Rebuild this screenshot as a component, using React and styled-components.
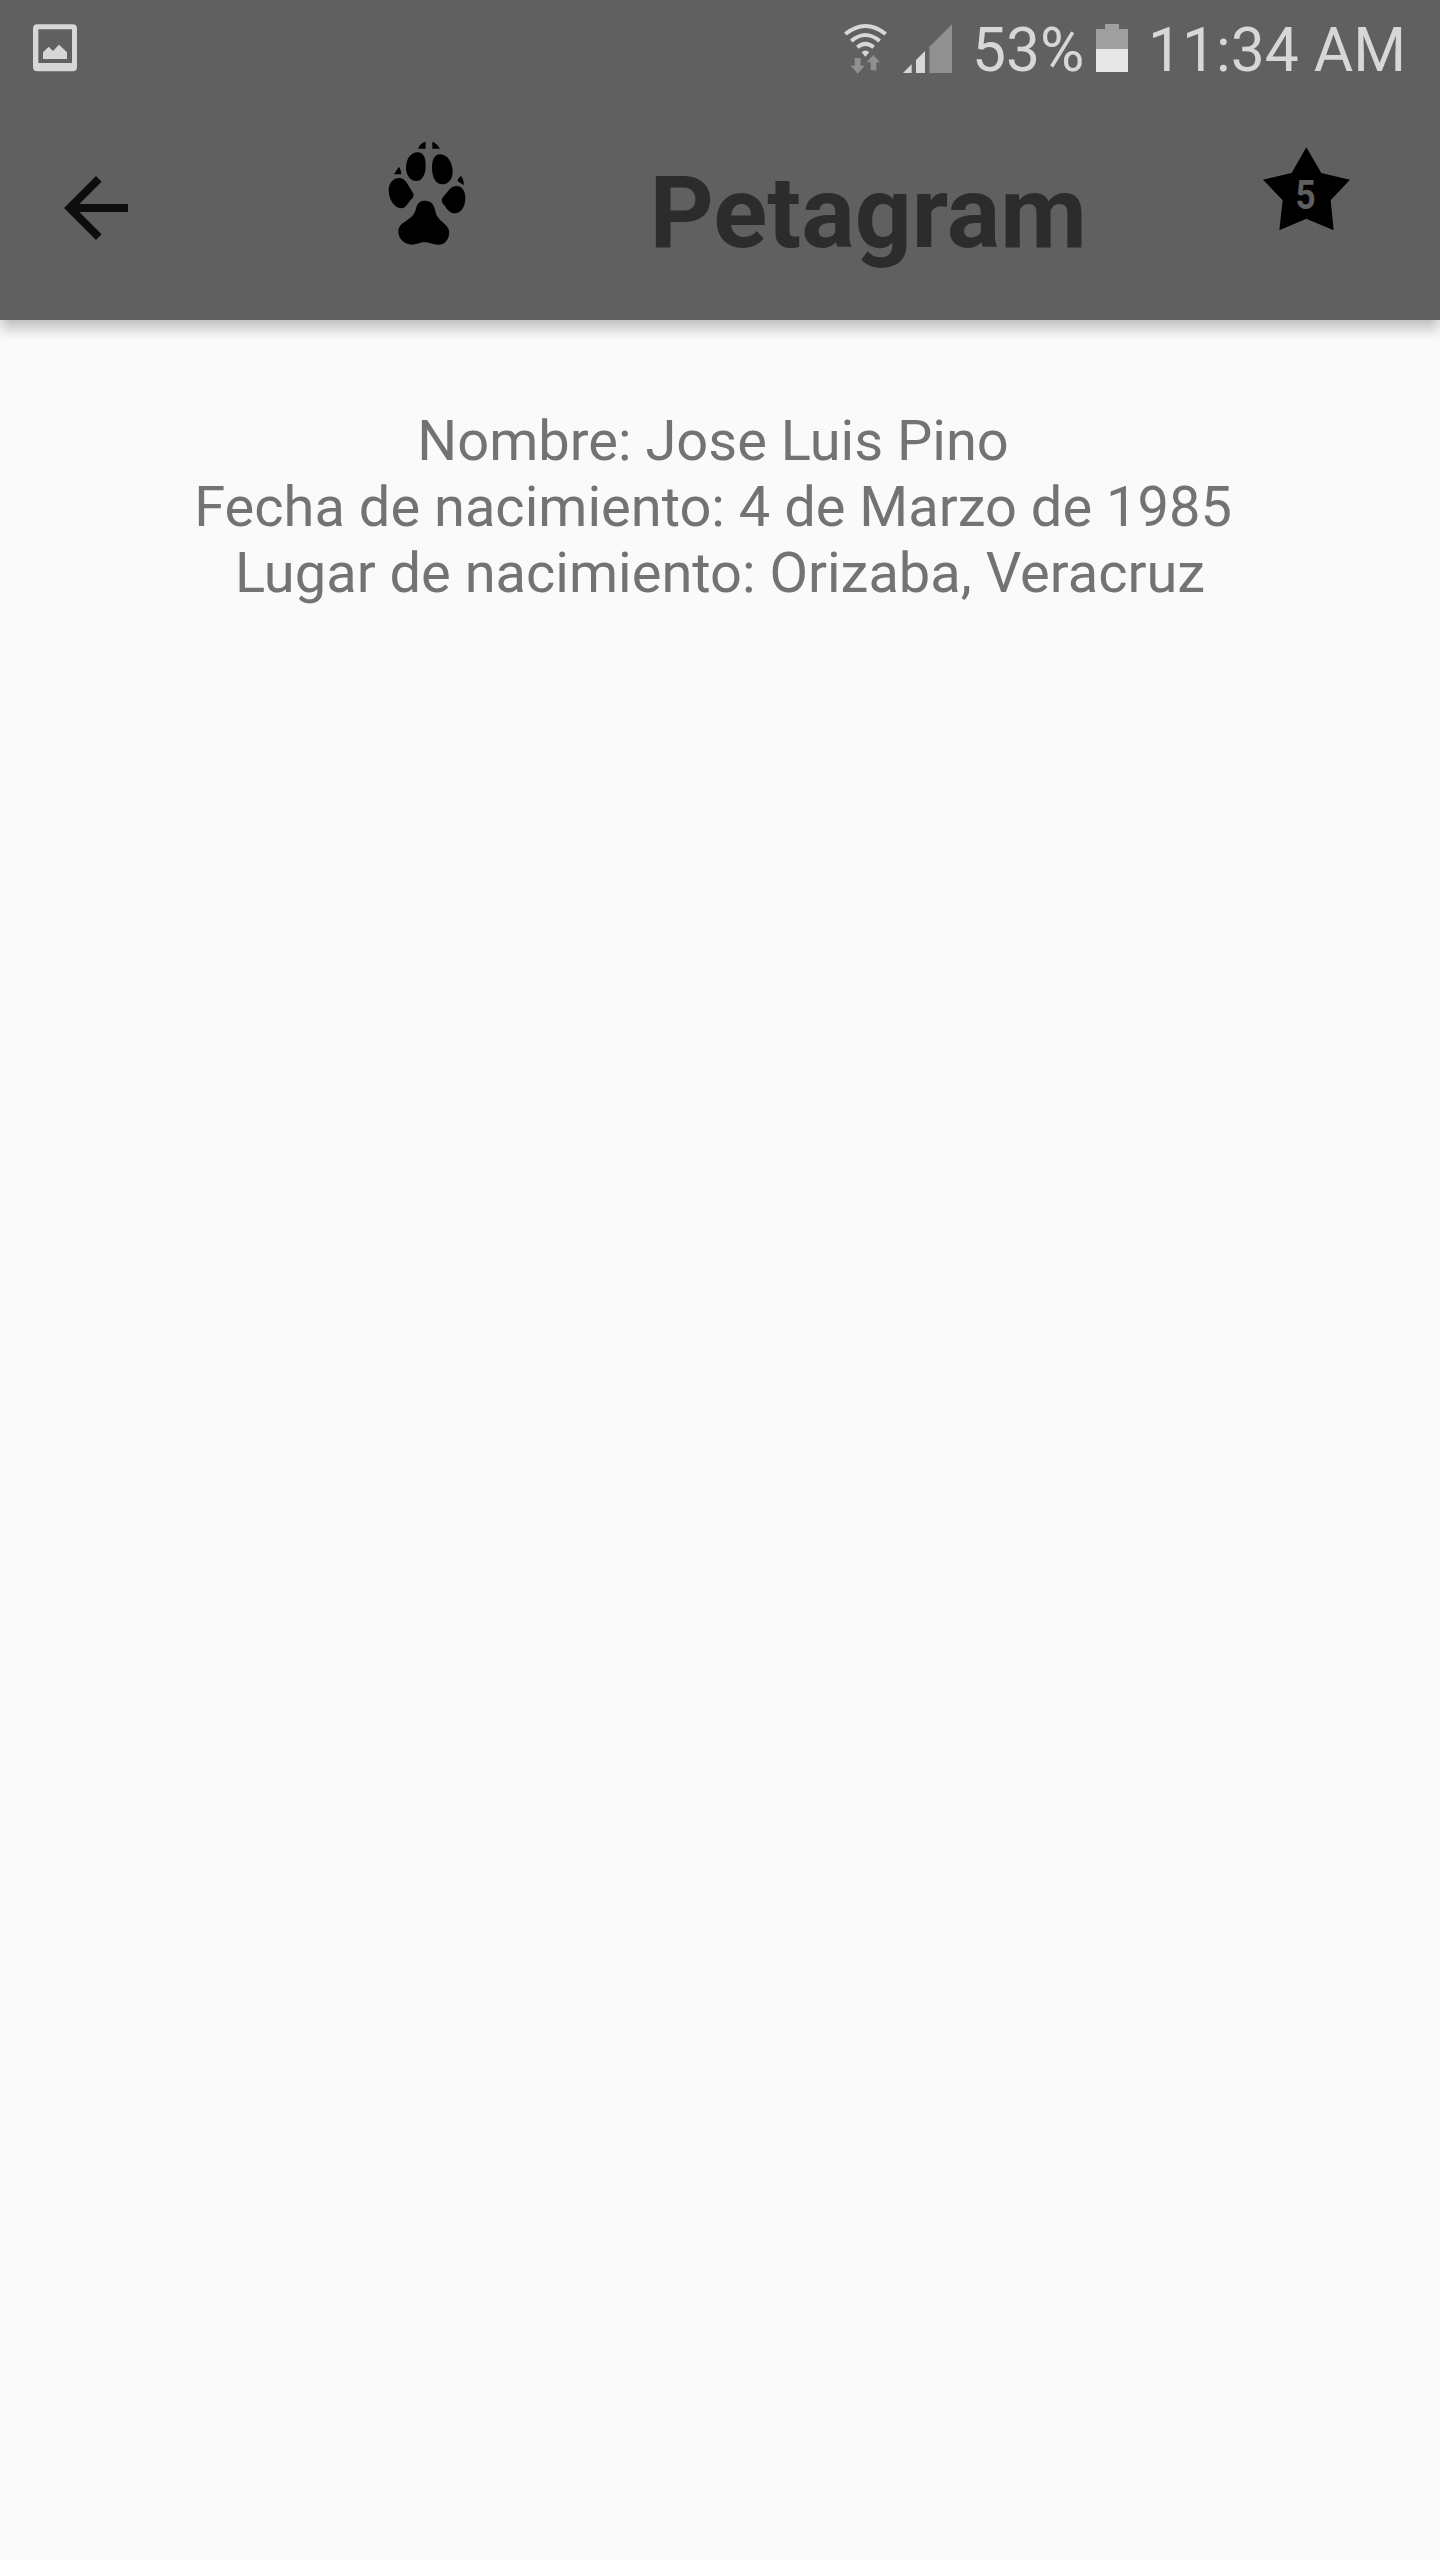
import React from "react";
import styled, { createGlobalStyle } from "styled-components";

const GlobalStyle = createGlobalStyle`
  body { margin: 0; background: #fafafa; }
`;

const Screen = styled.div`
  width: 1440px;
  min-height: 2560px;
  display: flex;
  flex-direction: column;
  background: #fafafa;
  font-family: Roboto, "Liberation Sans", sans-serif;
`;

const Header = styled.header`
  height: 320px;
  background: #606060;
`;

const StatusBar = styled.div`
  height: 96px;
  box-sizing: border-box;
  padding: 0 35px 0 33px;
  display: flex;
  align-items: center;
  justify-content: space-between;
`;

const StatusGroup = styled.div`
  height: 96px;
  display: flex;
  align-items: center;
`;

const StatusText = styled.span`
  width: ${(p) => p.$width}px;
  margin-left: ${(p) => p.$gap}px;
  font-size: 60.5px;
  line-height: 96px;
  padding-top: 6px;
  white-space: nowrap;
  color: #d7d7d7;
`;

const Icon = styled.svg`
  display: block;
  flex: none;
  width: ${(p) => p.$w}px;
  height: ${(p) => p.$h}px;
  margin-left: ${(p) => p.$left || 0}px;
  margin-top: ${(p) => p.$top || 0}px;
`;

const AppBar = styled.div`
  height: 224px;
  display: flex;
  align-items: flex-start;
`;

const Title = styled.h1`
  flex: none;
  width: 431px;
  margin: 57px 0 0 182.5px;
  font-size: 100px;
  line-height: 120px;
  font-weight: 700;
  color: #2c2c2c;
`;

const Shadow = styled.div`
  height: 22px;
  background: linear-gradient(#c3c3c3, #d2d2d2 25%, #e8e8e8 55%, #f7f7f7 85%, #fafafa);
  mask-image: linear-gradient(90deg, rgba(0, 0, 0, 0.5), #000 10px, #000 1430px, rgba(0, 0, 0, 0.5));
`;

const Profile = styled.main`
  padding-top: 66px;
  text-align: center;
`;

const Line = styled.p`
  margin: 0;
  font-size: 56px;
  line-height: 66px;
  white-space: pre;
  color: #737373;
`;

const lines = [
  "Nombre: Jose Luis Pino ",
  "Fecha de nacimiento: 4 de Marzo de 1985 ",
  "Lugar de nacimiento: Orizaba, Veracruz",
];

const PictureIcon = () => (
  <Icon $w={44} $h={48} viewBox="99 72 132 144" fill="#d7d7d7">
    <path fillRule="evenodd" d="M112 73H218Q231 73 231 86V201Q231 214 218 214H112Q99 214 99 201V86Q99 73 112 73ZM115 88V189H216V88Z" />
    <path d="M129 177V157L146 140L159 153L177 134L201 157V177Z" />
  </Icon>
);

const WifiIcon = () => (
  <Icon $w={43} $h={51} viewBox="42 66 129 153">
    <g fill="none" stroke="#d7d7d7" strokeWidth="12">
      <path d="M46 99Q106 51 167 99" />
      <path d="M64 120Q106 84 149 120" />
      <path d="M82 139Q106 118 131 139" />
    </g>
    <path d="M95 154Q106 143 118 154L106 167Z" fill="#d7d7d7" />
    <path d="M74 171H92V194H104L83 218L62 194H74ZM122 208V184H110L130 162L150 184H139V208Z" fill="#909090" />
  </Icon>
);

const SignalIcon = () => (
  <Icon $w={49} $h={49} $left={16} viewBox="219 69 147 147">
    <path d="M219 216L245 190V216ZM258 216V177L285 150V216Z" fill="#d7d7d7" />
    <path d="M298 216V137L366 70V216Z" fill="#909090" />
  </Icon>
);

const BatteryIcon = () => (
  <Icon $w={32} $h={48} $left={11} viewBox="798 72 96 144">
    <path d="M825 72H867V87H894V148H798V87H825Z" fill="#a0a0a0" />
    <path d="M798 147H894V216H798Z" fill="#e7e7e7" />
  </Icon>
);

const BackIcon = () => (
  <Icon $w={96} $h={96} $left={48} $top={64} viewBox="0 0 24 24" fill="#0d0d0d">
    <path d="M20 11H7.83l5.59-5.59L12 4l-8 8 8 8 1.41-1.41L7.83 13H20v-2z" />
  </Icon>
);

const PawIcon = () => (
  <Icon $w={80} $h={107} $left={243} $top={44} viewBox="81 60 240 321">
    <path d="M174 86Q180 70 197 65V86ZM217 86V65Q230 69 240 86ZM102 163L117 140Q124 149 124 163ZM293 184Q293 174 304 168Q312 180 312 196Z" />
    <path d="M175 97C191 99 197 113 197 137C197 164 186 183 169 183C150 183 138 164 138 143C138 117 153 95 175 97Z" />
    <path d="M240 103C262 103 278 128 278 155C278 177 265 193 247 193C226 193 216 170 216 144C216 119 223 103 240 103Z" />
    <path d="M117 174C135 174 143 192 153 209C164 225 163 229 152 240C141 252 138 264 124 265C102 265 86 237 86 211C86 190 98 175 117 174Z" />
    <path d="M287 198C305 197 316 211 316 234C316 260 303 280 284 280C269 280 262 268 252 255C242 243 243 237 254 226C265 213 271 200 287 198Z" />
    <path d="M195 242C214 242 222 253 226 273C230 295 244 302 257 315C266 323 269 334 267 345C264 363 251 375 235 374C217 374 209 367 193 367C180 367 171 374 155 374C133 374 115 356 115 334C115 316 129 309 143 299C160 287 164 279 168 266C172 249 180 242 195 242Z" />
  </Icon>
);

const StarIcon = () => (
  <Icon $w={89} $h={86} $left={181.5} $top={50} viewBox="66 48 267 258">
    <path d="M199 52L244 129L330 149L272 211L281 301L199 266L118 301L128 211L69 149L155 129Z" />
    <text
      transform="translate(197 236) scale(.85 1)"
      textAnchor="middle"
      fontFamily="Roboto, sans-serif"
      fontWeight="700"
      fontSize="124"
      fill="#606060"
    >
      5
    </text>
  </Icon>
);

export default function App() {
  return (
    <Screen>
      <GlobalStyle />
      <Header>
        <StatusBar>
          <PictureIcon />
          <StatusGroup>
            <WifiIcon />
            <SignalIcon />
            <StatusText $gap={20} $width={113}>53%</StatusText>
            <BatteryIcon />
            <StatusText $gap={20} $width={257}>11:34 AM</StatusText>
          </StatusGroup>
        </StatusBar>
        <AppBar>
          <BackIcon />
          <PawIcon />
          <Title>Petagram</Title>
          <StarIcon />
        </AppBar>
      </Header>
      <Shadow />
      <Profile>
        {lines.map((text) => (
          <Line key={text}>{text}</Line>
        ))}
      </Profile>
    </Screen>
  );
}
